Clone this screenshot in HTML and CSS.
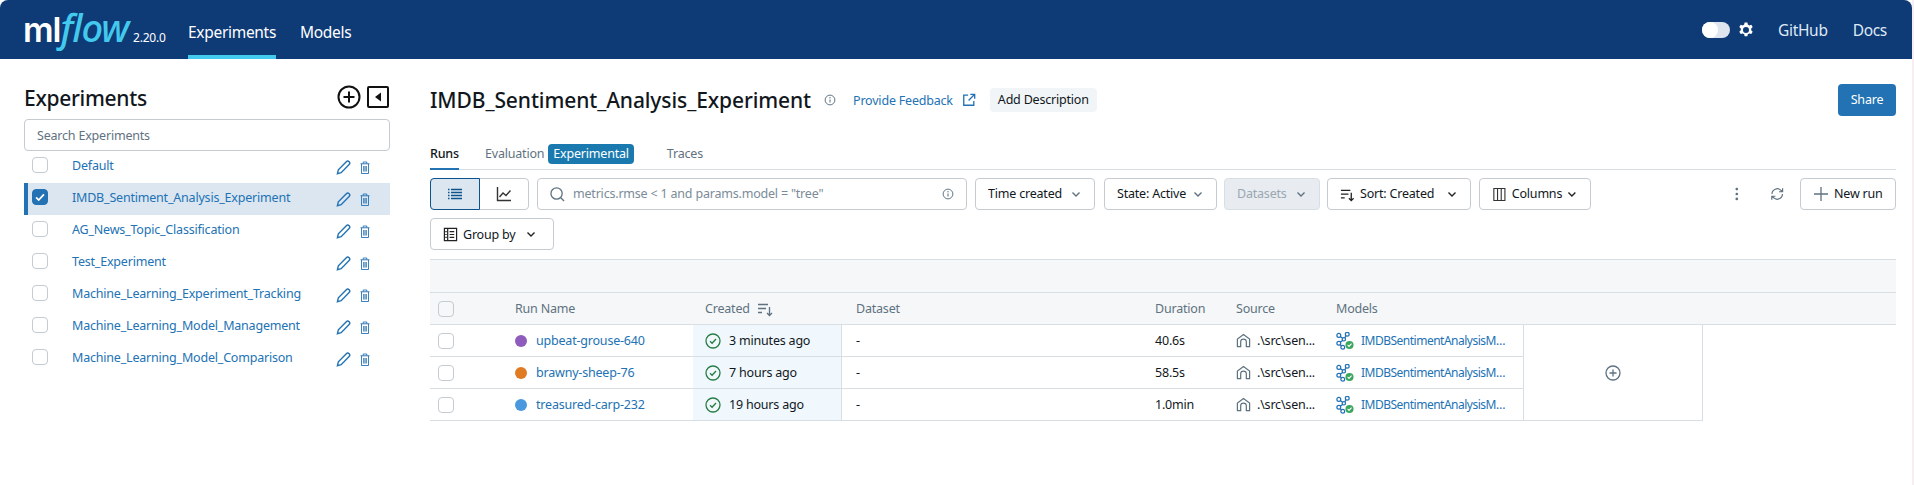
FILE: index.html
```html
<!DOCTYPE html>
<html lang="en">
<head>
<meta charset="utf-8">
<title>MLflow</title>
<link rel="stylesheet" href="styles.css">
</head>
<body>
<div class="app">
<header class="topbar">
  <div class="logo"><span class="logo-ml">ml</span><span class="logo-flow">flow</span></div>
  <span class="version">2.20.0</span>
  <nav class="topnav">
    <a class="topnav-item active">Experiments</a>
    <a class="topnav-item">Models</a>
  </nav>
  <div class="top-right">
    <span class="toggle"><span class="knob"></span></span>
    <svg class="gear" viewBox="0 0 16 16"><path fill="#fff" fill-rule="evenodd" d="M6.600.5h2.800l.4 2 1.500.9 2-.7 1.400 2.400-1.500 1.400v1.800l1.500 1.400-1.400 2.400-2-.7-1.500.9-.4 2H6.600l-.4-2-1.500-.9-2 .7L1.300 9.700l1.500-1.400V6.500L1.300 5.100l1.400-2.400 2 .7 1.500-.9zM8 5a3 3 0 100 6 3 3 0 000-6z"/></svg>
    <a class="top-link github">GitHub</a>
    <a class="top-link">Docs</a>
  </div>
</header>
<div class="body">
  <aside class="sidebar">
    <div class="side-head">
      <h2 class="side-title">Experiments</h2>
      <svg class="side-plus" viewBox="0 0 24 24"><circle cx="12" cy="12" r="10.500" fill="none" stroke="#111" stroke-width="2"/><path d="M12 6.500v11M6.500 12h11" stroke="#111" stroke-width="2"/></svg>
      <svg class="side-collapse" viewBox="0 0 22 22"><rect x="1" y="1" width="20" height="20" rx="1" fill="none" stroke="#111" stroke-width="2"/><path d="M14 6.500v9L8 11z" fill="#111"/></svg>
    </div>
    <div class="side-search">Search Experiments</div>
    <ul class="exp-list">
      <li class="exp"><span class="cb"></span><a class="exp-name">Default</a><svg class="pen" viewBox="0 0 16 16"><use href="#i-pen"/></svg><svg class="bin" viewBox="0 0 10 13"><use href="#i-bin"/></svg></li>
      <li class="exp selected"><span class="cb on"><svg viewBox="0 0 16 16"><path d="M3.500 8.500l3 3 6-6.500" fill="none" stroke="#fff" stroke-width="2"/></svg></span><a class="exp-name">IMDB_Sentiment_Analysis_Experiment</a><svg class="pen" viewBox="0 0 16 16"><use href="#i-pen"/></svg><svg class="bin" viewBox="0 0 10 13"><use href="#i-bin"/></svg></li>
      <li class="exp"><span class="cb"></span><a class="exp-name">AG_News_Topic_Classification</a><svg class="pen" viewBox="0 0 16 16"><use href="#i-pen"/></svg><svg class="bin" viewBox="0 0 10 13"><use href="#i-bin"/></svg></li>
      <li class="exp"><span class="cb"></span><a class="exp-name">Test_Experiment</a><svg class="pen" viewBox="0 0 16 16"><use href="#i-pen"/></svg><svg class="bin" viewBox="0 0 10 13"><use href="#i-bin"/></svg></li>
      <li class="exp"><span class="cb"></span><a class="exp-name">Machine_Learning_Experiment_Tracking</a><svg class="pen" viewBox="0 0 16 16"><use href="#i-pen"/></svg><svg class="bin" viewBox="0 0 10 13"><use href="#i-bin"/></svg></li>
      <li class="exp"><span class="cb"></span><a class="exp-name">Machine_Learning_Model_Management</a><svg class="pen" viewBox="0 0 16 16"><use href="#i-pen"/></svg><svg class="bin" viewBox="0 0 10 13"><use href="#i-bin"/></svg></li>
      <li class="exp"><span class="cb"></span><a class="exp-name">Machine_Learning_Model_Comparison</a><svg class="pen" viewBox="0 0 16 16"><use href="#i-pen"/></svg><svg class="bin" viewBox="0 0 10 13"><use href="#i-bin"/></svg></li>
    </ul>
  </aside>
  <main class="main">
    <div class="title-row">
      <h1 class="title">IMDB_Sentiment_Analysis_Experiment</h1>
      <svg class="info title-info" viewBox="0 0 16 16"><use href="#i-info"/></svg>
      <a class="feedback">Provide Feedback</a>
      <svg class="ext" viewBox="0 0 16 16"><path d="M7 2.500H2v11.500h11.500V9M9.500 1.500h5v5M14.500 1.500L7.500 8.500" fill="none" stroke="#2272b4" stroke-width="1.500"/></svg>
      <span class="add-desc">Add Description</span>
      <span class="share">Share</span>
    </div>
    <div class="tabs">
      <span class="tab active">Runs</span>
      <span class="tab eval">Evaluation</span><span class="badge">Experimental</span>
      <span class="tab traces">Traces</span>
    </div>
    <div class="toolbar">
      <div class="seg">
        <span class="seg-btn seg-on"><svg viewBox="0 0 16 16"><path d="M1 3.500h1.500M4 3.500h11M1 6.500h1.500M4 6.500h11M1 9.500h1.500M4 9.500h11M1 12.500h1.500M4 12.500h11" stroke="#0e538b" stroke-width="1.300"/></svg></span>
        <span class="seg-btn"><svg viewBox="0 0 16 16"><path d="M1.500 1v13.500H15" fill="none" stroke="#333" stroke-width="1.400"/><path d="M3.500 11l3.500-4 3 2.500 4.500-5" fill="none" stroke="#333" stroke-width="1.400"/></svg></span>
      </div>
      <div class="search">
        <svg class="mag" viewBox="0 0 16 16"><circle cx="7" cy="7" r="6" fill="none" stroke="#5f7281" stroke-width="1.400"/><path d="M11.500 11.500l3.500 3.500" stroke="#5f7281" stroke-width="1.400"/></svg>
        <span class="search-text">metrics.rmse &lt; 1 and params.model = "tree"</span>
        <svg class="info" viewBox="0 0 16 16"><use href="#i-info"/></svg>
      </div>
      <span class="btn w-time">Time created<svg class="chev grey" viewBox="0 0 12 12"><use href="#i-chev"/></svg></span>
      <span class="btn w-state">State: Active<svg class="chev grey" viewBox="0 0 12 12"><use href="#i-chev"/></svg></span>
      <span class="btn w-data disabled">Datasets<svg class="chev grey" viewBox="0 0 12 12"><use href="#i-chev"/></svg></span>
      <span class="btn w-sort"><svg class="ico" viewBox="0 0 16 16"><path d="M1 3.500h10M1 7.500h8M1 11.500h4M12 6v8.500M9.500 12l2.500 2.500 2.500-2.500" fill="none" stroke="#222" stroke-width="1.400"/></svg>Sort: Created<svg class="chev" viewBox="0 0 12 12"><use href="#i-chev"/></svg></span>
      <span class="btn w-cols"><svg class="ico" viewBox="0 0 16 16"><path d="M2 1.500h12v13H2zM6 1.500v13M10 1.500v13" fill="none" stroke="#333" stroke-width="1.200"/></svg>Columns<svg class="chev cols-chev" viewBox="0 0 12 12"><use href="#i-chev"/></svg></span>
      <svg class="more" viewBox="0 0 4 16"><circle cx="2" cy="2.500" r="1.500"/><circle cx="2" cy="8" r="1.500"/><circle cx="2" cy="13.500" r="1.500"/></svg>
      <svg class="refresh" viewBox="0 0 16 16"><path d="M2.200 8a5.800 5.800 0 0 1 9.900-4.100L14 5.500M14 1.500v4h-4M13.800 8a5.800 5.800 0 0 1-9.900 4.100L2 10.500M2 14.500v-4h4" fill="none" stroke="#5f7281" stroke-width="1.300"/></svg>
      <span class="btn w-new"><svg class="ico plus" viewBox="0 0 16 16"><path d="M8 1v14M1 8h14" stroke="#5f7281" stroke-width="1.300"/></svg>New run</span>
    </div>
    <div class="group-row">
      <span class="btn w-group"><svg class="ico" viewBox="0 0 16 16"><path d="M1.500 1.500h13v13h-13zM5 1.500v13M7 5h5M7 8h5M7 11h5M2.500 5h1.500M2.500 8h1.500M2.500 11h1.500" fill="none" stroke="#222" stroke-width="1.300"/></svg>Group by<svg class="chev group-chev" viewBox="0 0 12 12"><use href="#i-chev"/></svg></span>
    </div>
    <div class="band"></div>
    <div class="grid head">
      <div class="c c-check"><span class="cb cb-head"></span></div>
      <div class="c c-name">Run Name</div>
      <div class="c c-created">Created<svg class="sort-ico" viewBox="0 0 16 16"><path d="M1 3.500h10M1 7.500h8M1 11.500h4M12.500 6v8.500M10 12l2.500 2.500L15 12" fill="none" stroke="#5f7281" stroke-width="1.300"/></svg></div>
      <div class="c c-data">Dataset</div>
      <div class="c c-dur">Duration</div>
      <div class="c c-src">Source</div>
      <div class="c c-model">Models</div>
      <div class="c c-end"></div>
    </div>
    <div class="table-body">
      <div class="rows">
        <div class="grid row">
          <div class="c c-check"><span class="cb"></span></div>
          <div class="c c-name"><span class="dot purple"></span><a class="run">upbeat-grouse-640</a></div>
          <div class="c c-created cell-created"><svg class="ok" viewBox="0 0 16 16"><use href="#i-ok"/></svg>3 minutes ago</div>
          <div class="c c-data">-</div>
          <div class="c c-dur">40.6s</div>
          <div class="c c-src"><svg class="home" viewBox="0 0 16 16"><use href="#i-home"/></svg>.\src\sen...</div>
          <div class="c c-model"><svg class="model" viewBox="0 0 16 16"><use href="#i-model"/></svg><a class="run model-name">IMDBSentimentAnalysisM…</a></div>
        </div>
        <div class="grid row">
          <div class="c c-check"><span class="cb"></span></div>
          <div class="c c-name"><span class="dot orange"></span><a class="run">brawny-sheep-76</a></div>
          <div class="c c-created cell-created"><svg class="ok" viewBox="0 0 16 16"><use href="#i-ok"/></svg>7 hours ago</div>
          <div class="c c-data">-</div>
          <div class="c c-dur">58.5s</div>
          <div class="c c-src"><svg class="home" viewBox="0 0 16 16"><use href="#i-home"/></svg>.\src\sen...</div>
          <div class="c c-model"><svg class="model" viewBox="0 0 16 16"><use href="#i-model"/></svg><a class="run model-name">IMDBSentimentAnalysisM…</a></div>
        </div>
        <div class="grid row">
          <div class="c c-check"><span class="cb"></span></div>
          <div class="c c-name"><span class="dot blue"></span><a class="run">treasured-carp-232</a></div>
          <div class="c c-created cell-created"><svg class="ok" viewBox="0 0 16 16"><use href="#i-ok"/></svg>19 hours ago</div>
          <div class="c c-data">-</div>
          <div class="c c-dur">1.0min</div>
          <div class="c c-src"><svg class="home" viewBox="0 0 16 16"><use href="#i-home"/></svg>.\src\sen...</div>
          <div class="c c-model"><svg class="model" viewBox="0 0 16 16"><use href="#i-model"/></svg><a class="run model-name">IMDBSentimentAnalysisM…</a></div>
        </div>
      </div>
      <div class="add-col"><svg class="add-ico" viewBox="0 0 16 16"><circle cx="8" cy="8" r="7" fill="none" stroke="#5f7281" stroke-width="1.300"/><path d="M8 4.500v7M4.500 8h7" stroke="#5f7281" stroke-width="1.300"/></svg></div>
    </div>
  </main>
</div>
</div>
<svg class="defs" width="0" height="0">
  <defs>
    <g id="i-pen"><path d="M11 1.800a2.100 2.100 0 0 1 3 3L5.500 13.500l-4 1.200 1-4.200z" fill="none" stroke="#2272b4" stroke-width="1.500"/></g>
    <g id="i-bin"><path d="M.5 2.800h9M3.200 2.800V1h3.600v1.800M1.500 2.800v9.700h7V2.800M3.700 5v5.500M5 5v5.500M6.300 5v5.500" fill="none" stroke="#2272b4" stroke-width=".9"/></g>
    <g id="i-info"><circle cx="8" cy="8" r="6.500" fill="none" stroke="#5f7281" stroke-width="1.300"/><path d="M8 7.200v4" stroke="#5f7281" stroke-width="1.400"/><circle cx="8" cy="5" r=".9" fill="#5f7281"/></g>
    <g id="i-chev"><path d="M2.500 4.500L6 8l3.500-3.500" fill="none" stroke="currentColor" stroke-width="1.400"/></g>
    <g id="i-ok"><circle cx="8" cy="8" r="7" fill="none" stroke="#277c43" stroke-width="1.300"/><path d="M5 8.200l2.100 2.100L11 6" fill="none" stroke="#277c43" stroke-width="1.300"/></g>
    <g id="i-home"><path d="M1.500 14.500V6.500L8 1.500l6.500 5v8h-3.500V9.500a3 3 0 0 0-6 0v5z" fill="none" stroke="#5f7281" stroke-width="1.300"/></g>
    <g id="i-model"><g fill="none" stroke="#2272b4" stroke-width="1.100"><circle cx="2.500" cy="3" r="1.700"/><circle cx="10" cy="2" r="1.700"/><circle cx="2.500" cy="10" r="1.700"/><circle cx="6" cy="13.500" r="1.700"/><circle cx="7" cy="6.500" r="1.500"/><path d="M3.800 4L5.900 5.600M8.800 3.300L7.800 5.200M5.900 7.500L3.700 9M3.700 11.300L5 12.500"/></g><circle cx="12" cy="11.500" r="3.600" fill="#3ba65e"/><path d="M10.300 11.500l1.300 1.300 2.200-2.500" fill="none" stroke="#fff" stroke-width="1"/></g>
  </defs>
</svg>
</body>
</html>
```
FILE: styles.css
```css
* { box-sizing: border-box; }
html, body { margin: 0; height: 100%; background: #f6eef0; }
body { font-family: "Noto Sans", "Open Sans", sans-serif; font-size: 12.5px; letter-spacing: -0.2px; color: #11171c; overflow: hidden; }
a { text-decoration: none; }
ul { list-style: none; margin: 0; padding: 0; }
.defs { position: absolute; }
.app { width: 1912px; height: 485px; background: #fff; }

.topbar { height: 59px; background: #0e3a75; border-radius: 8px 8px 0 0; display: flex; align-items: center; padding-left: 23px; color: #fff; }
.logo { display: flex; align-items: baseline; width: 110px; height: 59px; line-height: 54px; flex: none; }
.logo-ml { font-family: "Inter", sans-serif; font-size: 34px; font-weight: 600; letter-spacing: -1px; color: #fff; }
.logo-flow { font-family: "Noto Sans", sans-serif; font-style: italic; font-size: 38px; font-weight: 500; color: #43c9ed; letter-spacing: -1px; }
.version { font-size: 12px; width: 55px; padding-top: 16px; color: #fff; flex: none; }
.topnav { display: flex; height: 59px; gap: 24px; }
.topnav-item { color: #fff; font-size: 15.500px; letter-spacing: -0.3px; line-height: 64px; height: 59px; }
.topnav-item.active { border-bottom: 4px solid #43c9ed; }
.top-right { margin-left: auto; display: flex; align-items: center; padding-right: 25px; }
.toggle { width: 28px; height: 16px; border-radius: 8px; background: #dfe5ee; display: flex; }
.knob { width: 16px; height: 16px; border-radius: 50%; background: #fff; }
.gear { width: 16px; height: 16px; margin-left: 8px; }
.top-link { color: #dfe9f5; font-size: 15.500px; letter-spacing: -0.3px; }
.github { margin-left: 24px; margin-right: 25px; }

.body { display: flex; }
.sidebar { width: 366px; margin-left: 24px; }
.side-head { display: flex; align-items: center; height: 60px; padding-top: 15px; }
.side-title { font-size: 21px; line-height: 30px; font-weight: 500; letter-spacing: -0.3px; margin: 3px 0 0; flex: 1; color: #11171c; }
.side-plus { width: 24px; height: 24px; margin-right: 6px; }
.side-collapse { width: 22px; height: 22px; margin-right: 1px; }
.side-search { height: 32px; border: 1px solid #c4ccd2; border-radius: 4px; padding-left: 12px; line-height: 31px; color: #5f7281; }
.exp { height: 32px; display: flex; align-items: center; padding-left: 8px; }
.exp.selected { background: #dbe6f1; border-left: 4px solid #2272b4; padding-left: 4px; }
.cb { width: 16px; height: 16px; border: 1px solid #c4ccd2; border-radius: 4px; background: #fff; flex: none; display: block; }
.exp .cb { margin-bottom: 4px; }
.cb.on { background: #2272b4; border-color: #2272b4; }
.cb svg { display: block; width: 14px; height: 14px; }
.exp-name { color: #2272b4; margin-left: 24px; margin-bottom: 4px; flex: 1; }
.pen { width: 15px; height: 15px; flex: none; margin-right: 9px; }
.bin { width: 10px; height: 13px; flex: none; margin-right: 20px; }

.main { margin-left: 40px; width: 1466px; }
.title-row { display: flex; align-items: center; height: 40px; margin-top: 21px; margin-bottom: 1px; }
.title { font-size: 21px; font-weight: 500; letter-spacing: -0.1px; margin: 0; line-height: 32px; color: #11171c; }
.info { width: 12px; height: 12px; flex: none; }
.title-info { margin-left: 13px; }
.feedback { color: #2272b4; margin-left: 17px; }
.ext { width: 14px; height: 14px; margin-left: 9px; }
.add-desc { margin-left: 14px; height: 24px; line-height: 24px; padding: 0 8px; background: #f2f5f7; border-radius: 4px; }
.share { margin-left: auto; width: 58px; height: 32px; line-height: 32px; text-align: center; background: #2272b4; color: #fff; border-radius: 4px; }

.tabs { display: flex; align-items: flex-start; height: 41px; margin-top: 9px; border-bottom: 1px solid #d8dfe4; color: #5f7281; }
.tab { height: 41px; line-height: 50px; }
.tab.active { color: #11171c; border-bottom: 2px solid #2272b4; width: 29px; font-weight: 500; }
.eval { margin-left: 26px; }
.badge { margin-left: 4px; margin-top: 15px; background: #1a7aaf; color: #fff; border-radius: 4px; height: 20px; line-height: 20px; padding: 0 5px; }
.traces { margin-left: 33px; }

.toolbar { display: flex; align-items: center; margin-top: 8px; height: 32px; line-height: 32px; }
.seg { display: flex; width: 99px; height: 32px; border: 1px solid #c4ccd2; border-radius: 4px; flex: none; }
.seg-btn { flex: 1; display: flex; align-items: center; justify-content: center; }
.seg-btn svg { width: 16px; height: 16px; }
.seg-on { background: #dbe6f1; border: 1px solid #0e538b; margin: -1px 0 -1px -1px; border-radius: 4px 0 0 4px; flex: none; width: 50px; }
.search { display: flex; align-items: center; width: 430px; height: 32px; margin-left: 8px; border: 1px solid #c4ccd2; border-radius: 4px; padding: 0 12px; flex: none; }
.mag { width: 15px; height: 15px; }
.search-text { flex: 1; margin-left: 8px; color: #7b8b98; }
.btn { display: flex; align-items: center; height: 32px; border: 1px solid #c4ccd2; border-radius: 4px; padding-left: 12px; flex: none; background: #fff; white-space: nowrap; }
.chev { width: 12px; height: 12px; color: #222; margin-left: auto; margin-right: 12px; }
.chev.grey { color: #5f7281; }
.ico { width: 15px; height: 15px; margin-right: 5px; }
.w-time { width: 120px; margin-left: 8px; }
.w-state { width: 113px; margin-left: 9px; }
.w-data { width: 96px; margin-left: 7px; }
.disabled { background: #e8ecf0; color: #9aa7b2; border-color: #d8dfe4; }
.w-sort { width: 144px; margin-left: 7px; }
.w-cols { width: 112px; margin-left: 8px; }
.cols-chev { margin-left: 4px; }
.more { width: 4px; height: 16px; margin-left: 144px; fill: #5f7281; }
.refresh { width: 16px; height: 16px; margin-left: 31px; }
.w-new { width: 96px; margin-left: 16px; }
.plus { width: 16px; height: 16px; }
.group-row { margin-top: 8px; height: 32px; }
.w-group { width: 124px; }
.group-chev { margin-right: 16px; }

.band { height: 34px; margin-top: 9px; background: #f5f7f8; border-top: 1px solid #d8dfe4; border-bottom: 1px solid #d8dfe4; }
.grid { display: grid; height: 32px; border-bottom: 1px solid #d8dfe4; }
.head { grid-template-columns: 85px 178px 149px 313px 81px 100px 188px 1fr; background: #f5f7f8; color: #5f7281; width: 100%; }
.c { display: flex; align-items: center; min-width: 0; white-space: nowrap; }
.c-check { padding-left: 8px; }
.c-created { padding-left: 12px; }
.c-data { padding-left: 14px; }
.cb-head { background: #f5f7f8; }
.sort-ico { width: 16px; height: 16px; margin-left: 7px; }
.table-body { display: flex; width: 1273px; }
.rows { width: 1093px; }
.row { grid-template-columns: 85px 178px 149px 313px 81px 100px 187px; }
.add-col { flex: 1; border: solid #d8dfe4; border-width: 0 1px 1px 1px; display: flex; align-items: center; justify-content: center; }
.add-ico { width: 16px; height: 16px; }
.dot { width: 12px; height: 12px; border-radius: 50%; margin-right: 9px; flex: none; }
.purple { background: #8e5cbd; }
.orange { background: #e07b24; }
.blue { background: #4a98de; }
.run { color: #2272b4; }
.model-name { font-size: 12px; letter-spacing: -0.5px; }
.cell-created { background: #f0f8fd; border-right: 1px solid #d8dfe4; }
.ok { width: 16px; height: 16px; margin-right: 8px; }
.home { width: 15px; height: 15px; margin-right: 6px; flex: none; }
.model { width: 18px; height: 18px; margin-right: 7px; flex: none; }
```
